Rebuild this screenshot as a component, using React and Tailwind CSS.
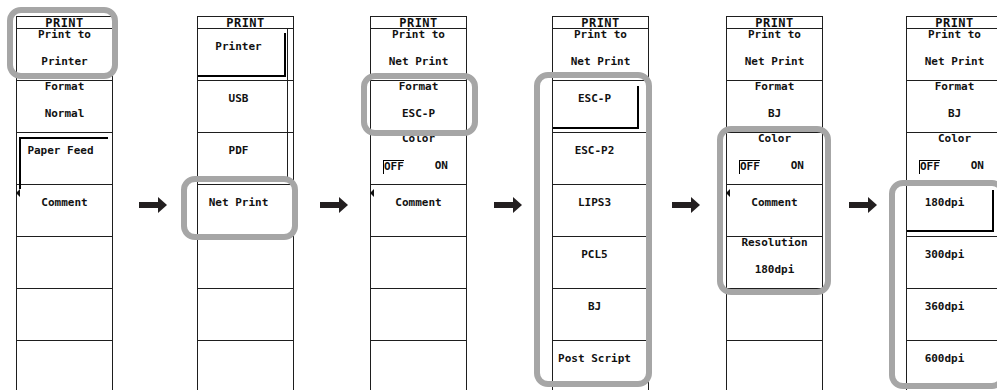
import React from "react";

const line = "border-[#1e1e1e]";

const Arrow = () => (
  <svg width="28" height="16" viewBox="0 0 28 16" className="block">
    <path d="M0 5H19V0L28 8L19 16V11H0Z" fill="#231f20" />
  </svg>
);

const Marker = () => (
  <svg width="4" height="8" viewBox="0 0 4 8" className="absolute -left-[1px] top-[4px]">
    <path d="M0 4L4 0V8Z" fill="#111" />
  </svg>
);

const Highlight = ({ className }) => (
  <div
    className={`pointer-events-none absolute z-10 rounded-[14px] border-[6px] border-[#a6a6a6] ${className}`}
  />
);

const Header = () => (
  <div className={`flex h-[13px] items-center justify-center border-y ${line} text-[12px] leading-none tracking-[0.5px]`}>
    PRINT
  </div>
);

const Cell = ({ children, className = "" }) => (
  <div className={`relative h-[52px] border-b ${line} text-center ${className}`}>{children}</div>
);

const TwoLine = ({ label, value }) => (
  <Cell>
    <div className="leading-[12px]">{label}</div>
    <div className="mt-[15px] leading-[12px]">{value}</div>
  </Cell>
);

// single label, optionally pushed left (list items sit left of the panel centre)
const Single = ({ children, marker, pad = "" }) => (
  <Cell className={`pt-[12px] ${pad}`}>
    {marker ? <Marker /> : null}
    <div className="leading-[12px]">{children}</div>
  </Cell>
);

// pressed button bevel
const Pressed = ({ className }) => (
  <div className={`absolute border-b-2 border-r-2 border-black ${className}`} />
);

const ColorCell = () => (
  <Cell>
    <div className="leading-[12px]">Color</div>
    <div className="mt-[15px] flex justify-between pl-[12px] pr-[18px] leading-[12px]">
      <span className="border-l border-t border-black pb-[1px]">OFF</span>
      <span>ON</span>
    </div>
  </Cell>
);

const Empty = () => <Cell />;

const Panel = ({ children }) => (
  <div className={`relative w-[97px] shrink-0 border-x ${line}`}>
    <Header />
    {children}
  </div>
);

const Gap = ({ className }) => (
  <div className={`shrink-0 pt-[181px] ${className}`}>
    <Arrow />
  </div>
);

export default function App() {
  return (
    <div className="relative h-[390px] w-[997px] overflow-hidden bg-white font-['DejaVu_Sans_Mono',monospace] text-[11px] font-bold text-[#111]">
      <div className="flex pl-[16px] pt-[16px]">
        {/* 1: print to printer */}
        <Panel>
          <Highlight className="-left-[10px] -top-[9px] h-[72px] w-[111px]" />
          <TwoLine label="Print to" value="Printer" />
          <TwoLine label="Format" value="Normal" />
          <Cell className="pr-[8px] pt-[12px]">
            <div className="absolute -bottom-[5px] left-[2px] right-[4px] top-[4px] border-l-2 border-t-2 border-black" />
            <div className="leading-[12px]">Paper Feed</div>
          </Cell>
          <Single marker>Comment</Single>
          <Empty />
          <Empty />
          <Empty />
        </Panel>

        <Gap className="w-[84px] pl-[26px]" />

        {/* 2: destination list */}
        <Panel>
          <div className="absolute left-[89px] top-[12px] h-[154px] w-px bg-[#1e1e1e]" />
          <Highlight className="-left-[17px] top-[160px] h-[64px] w-[117px]" />
          <Cell className="pr-[14px] pt-[12px]">
            <Pressed className="bottom-[3px] left-0 right-[7px] top-[4px]" />
            <div className="leading-[12px]">Printer</div>
          </Cell>
          <Single pad="pr-[14px]">USB</Single>
          <Single pad="pr-[14px]">PDF</Single>
          <Single pad="pr-[14px]">Net Print</Single>
          <Empty />
          <Empty />
          <Empty />
        </Panel>

        <Gap className="w-[76px] pl-[26px]" />

        {/* 3: net print, format */}
        <Panel>
          <Highlight className="-left-[10px] top-[57px] h-[63px] w-[117px]" />
          <TwoLine label="Print to" value="Net Print" />
          <TwoLine label="Format" value="ESC-P" />
          <ColorCell />
          <Single marker>Comment</Single>
          <Empty />
          <Empty />
          <Empty />
        </Panel>

        <Gap className="w-[85px] pl-[27px]" />

        {/* 4: format list */}
        <Panel>
          <Highlight className="-left-[19px] top-[56px] h-[315px] w-[118px]" />
          <TwoLine label="Print to" value="Net Print" />
          <Cell className="pr-[12px] pt-[12px]">
            <Pressed className="bottom-[3px] left-0 right-[9px] top-[5px]" />
            <div className="leading-[12px]">ESC-P</div>
          </Cell>
          <Single pad="pr-[12px]">ESC-P2</Single>
          <Single pad="pr-[12px]">LIPS3</Single>
          <Single pad="pr-[12px]">PCL5</Single>
          <Single pad="pr-[12px]">BJ</Single>
          <Single pad="pr-[12px]">Post Script</Single>
        </Panel>

        <Gap className="w-[77px] pl-[23px]" />

        {/* 5: BJ settings */}
        <Panel>
          <Highlight className="-left-[10px] top-[110px] h-[169px] w-[114px]" />
          <TwoLine label="Print to" value="Net Print" />
          <TwoLine label="Format" value="BJ" />
          <ColorCell />
          <Single marker>Comment</Single>
          <TwoLine label="Resolution" value="180dpi" />
          <Empty />
          <Empty />
        </Panel>

        <Gap className="w-[83px] pl-[26px]" />

        {/* 6: resolution list */}
        <Panel>
          <Highlight className="-left-[18px] top-[164px] h-[209px] w-[117px]" />
          <TwoLine label="Print to" value="Net Print" />
          <TwoLine label="Format" value="BJ" />
          <ColorCell />
          <Cell className="pr-[20px] pt-[12px]">
            <Pressed className="bottom-[4px] left-0 right-[8px] top-[5px]" />
            <div className="leading-[12px]">180dpi</div>
          </Cell>
          <Single pad="pr-[20px]">300dpi</Single>
          <Single pad="pr-[20px]">360dpi</Single>
          <Single pad="pr-[20px]">600dpi</Single>
        </Panel>
      </div>
    </div>
  );
}
